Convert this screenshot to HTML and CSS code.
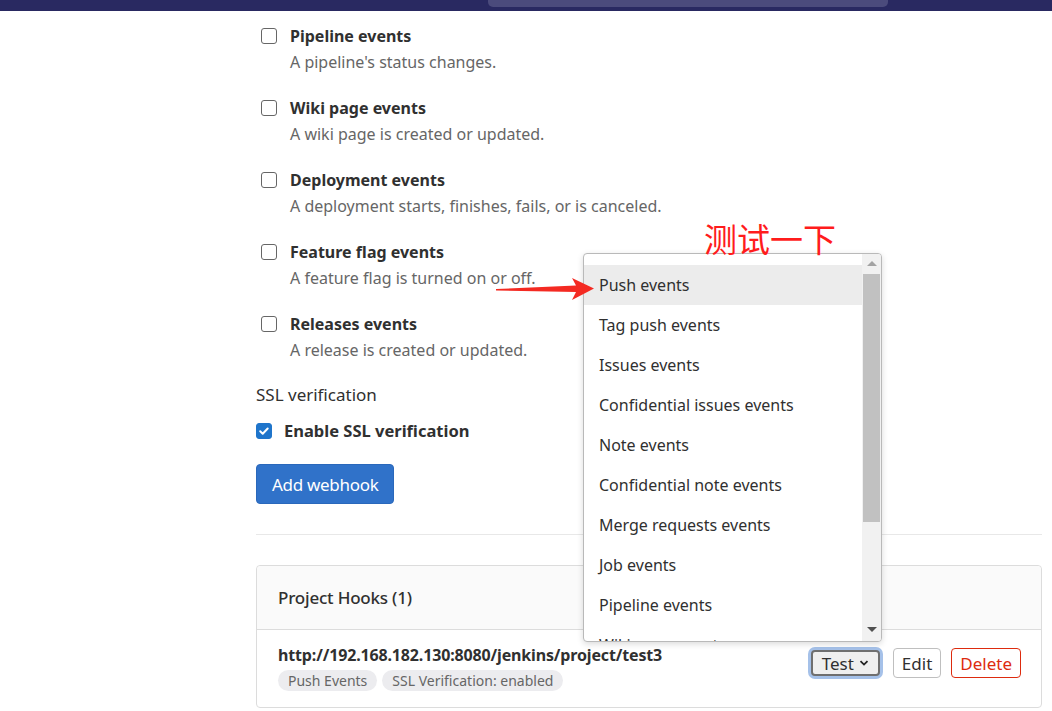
FILE: index.html
```html
<!DOCTYPE html>
<html lang="en">
<head>
    <meta charset="UTF-8">
    <meta name="viewport" content="width=device-width, initial-scale=1.0">
    <title>Webhooks</title>
    <link rel="stylesheet" href="styles.css">
</head>
<body>
    <header class="topbar">
        <div class="search"></div>
    </header>

    <main class="content">
        <ul class="events">
            <li class="event">
                <span class="box"></span>
                <div>
                    <div class="event-title">Pipeline events</div>
                    <div class="event-desc">A pipeline's status changes.</div>
                </div>
            </li>
            <li class="event">
                <span class="box"></span>
                <div>
                    <div class="event-title">Wiki page events</div>
                    <div class="event-desc">A wiki page is created or updated.</div>
                </div>
            </li>
            <li class="event">
                <span class="box"></span>
                <div>
                    <div class="event-title">Deployment events</div>
                    <div class="event-desc">A deployment starts, finishes, fails, or is canceled.</div>
                </div>
            </li>
            <li class="event">
                <span class="box"></span>
                <div>
                    <div class="event-title">Feature flag events</div>
                    <div class="event-desc">A feature flag is turned on or off.</div>
                </div>
            </li>
            <li class="event">
                <span class="box"></span>
                <div>
                    <div class="event-title">Releases events</div>
                    <div class="event-desc">A release is created or updated.</div>
                </div>
            </li>
        </ul>

        <div class="ssl-label">SSL verification</div>
        <div class="ssl-check">
            <span class="box checked">
                <svg width="12" height="12" viewBox="0 0 12 12"><path d="M2.2 6.3l2.5 2.4 5-5.2" fill="none" stroke="#fff" stroke-width="2" stroke-linecap="round" stroke-linejoin="round"/></svg>
            </span>
            <span>Enable SSL verification</span>
        </div>

        <button class="btn-primary">Add webhook</button>

        <hr class="divider">

        <section class="card">
            <div class="card-header">Project Hooks (1)</div>
            <div class="card-body">
                <div class="hook-info">
                    <div class="hook-url">http://192.168.182.130:8080/jenkins/project/test3</div>
                    <div class="badges">
                        <span class="badge">Push Events</span>
                        <span class="badge">SSL Verification: enabled</span>
                    </div>
                </div>
                <div class="actions">
                    <button class="btn btn-test">Test
                        <svg width="10" height="8" viewBox="0 0 10 8"><path d="M1.5 2.2l3.5 3.4 3.5-3.4" fill="none" stroke="#222" stroke-width="1.8"/></svg>
                    </button>
                    <button class="btn">Edit</button>
                    <button class="btn btn-danger">Delete</button>
                </div>
            </div>
        </section>
    </main>

    <!-- open "Test" list -->
    <div class="menu">
        <ul class="menu-list">
            <li class="active">Push events</li>
            <li>Tag push events</li>
            <li>Issues events</li>
            <li>Confidential issues events</li>
            <li>Note events</li>
            <li>Confidential note events</li>
            <li>Merge requests events</li>
            <li>Job events</li>
            <li>Pipeline events</li>
            <li>Wiki page events</li>
        </ul>
        <div class="menu-scroll">
            <span class="arrow-up"></span>
            <span class="thumb"></span>
            <span class="arrow-down"></span>
        </div>
    </div>

    <div class="note">测试一下</div>
    <svg class="note-arrow" width="102" height="28" viewBox="0 0 102 28">
        <polygon points="1,13 81,9.5 77,2 99,12.5 77,24 81,16 1,14.5" fill="#f42a22"/>
    </svg>
</body>
</html>
```

FILE: styles.css
```css
body {
    margin: 0;
    font-family: "Noto Sans", "Open Sans", sans-serif;
    color: #303030;
    background-color: #ffffff;
}
.topbar {
    height: 11px;
    background-color: #292961;
    display: flex;
}
.search {
    margin-left: 488px;
    width: 400px;
    height: 7px;
    background-color: #4b4b7c;
    border-radius: 0 0 5px 5px;
}
.content {
    margin-left: 256px;
    width: 786px;
    padding-top: 13px;
}
.events {
    list-style: none;
    margin: 0;
    padding: 0 0 0 5px;
    display: flex;
    flex-direction: column;
    gap: 20px;
}
.event {
    display: flex;
    gap: 13px;
}
.box {
    flex: none;
    width: 14px;
    height: 14px;
    margin-top: 4px;
    border: 1px solid #666;
    border-radius: 3px;
    background-color: #fff;
    display: flex;
    align-items: center;
    justify-content: center;
}
.box.checked {
    margin-top: 0;
    border-color: #1f75cb;
    background-color: #1f75cb;
}
.event-title {
    font-size: 16px;
    font-weight: 700;
    line-height: 24px;
}
.event-desc {
    font-size: 16px;
    line-height: 28px;
    color: #666;
}
.ssl-label {
    margin-top: 19px;
    font-size: 17px;
    line-height: 24px;
}
.ssl-check {
    margin-top: 12px;
    display: flex;
    align-items: center;
    gap: 12px;
    font-size: 16.5px;
    font-weight: 700;
    line-height: 24px;
}
.btn-primary {
    margin-top: 21px;
    height: 40px;
    padding: 0 15px;
    font-family: inherit;
    font-size: 17px;
    letter-spacing: -0.3px;
    color: #fff;
    background-color: #3072c9;
    border: 1px solid #2a68bb;
    border-radius: 4px;
}
.divider {
    margin: 30px 0 0;
    border: none;
    border-top: 1px solid #e8e8e8;
}
.card {
    margin-top: 30px;
    border: 1px solid #dcdcdc;
    border-radius: 4px;
}
.card-header {
    height: 63px;
    display: flex;
    align-items: center;
    padding: 0 21px;
    background-color: #fafafa;
    border-bottom: 1px solid #dcdcdc;
    border-radius: 4px 4px 0 0;
    font-size: 17px;
    font-weight: 500;
    letter-spacing: -0.2px;
}
.card-body {
    display: flex;
    justify-content: space-between;
    align-items: flex-start;
    padding: 13px 20px 16px 21px;
}
.hook-url {
    font-size: 16px;
    font-weight: 700;
    line-height: 24px;
    letter-spacing: -0.15px;
}
.badges {
    margin-top: 3px;
    display: flex;
    gap: 5px;
}
.badge {
    height: 21px;
    line-height: 21px;
    padding: 0 10px;
    border-radius: 11px;
    background-color: #ececef;
    color: #666;
    font-size: 14px;
}
.actions {
    margin-top: 5px;
    display: flex;
    align-items: center;
    gap: 10px;
}
.btn {
    height: 30px;
    padding: 0 8px;
    font-family: inherit;
    font-size: 17px;
    color: #303030;
    background-color: #fff;
    border: 1px solid #bfbfbf;
    border-radius: 4px;
}
.btn-test {
    display: flex;
    align-items: center;
    gap: 5px;
    height: 26px;
    margin-right: 3px;
    padding: 0 9px;
    background-color: #efefef;
    border: 2px solid #6f6f6f;
    box-shadow: 0 0 0 3px #a5c1e9;
}
.btn-danger {
    color: #dd2b0e;
    border-color: #dd2b0e;
}
.menu {
    position: absolute;
    left: 583px;
    top: 253px;
    width: 297px;
    height: 387px;
    display: flex;
    background-color: #fff;
    border: 1px solid #b9b9b9;
    border-radius: 4px;
    box-shadow: 0 2px 6px rgba(0, 0, 0, 0.15);
    overflow: hidden;
}
.menu-list {
    flex: 1;
    list-style: none;
    margin: 0;
    padding: 11px 0 0;
    overflow: hidden;
}
.menu-list li {
    height: 40px;
    line-height: 40px;
    padding-left: 15px;
    font-size: 16px;
    color: #303030;
    white-space: nowrap;
}
.menu-list li.active {
    background-color: #ececec;
}
.menu-scroll {
    width: 19px;
    background-color: #f1f1f1;
    display: flex;
    flex-direction: column;
    align-items: center;
}
.arrow-up {
    margin-top: 7px;
    border-left: 5px solid transparent;
    border-right: 5px solid transparent;
    border-bottom: 5px solid #a3a3a3;
}
.thumb {
    margin-top: 8px;
    width: 17px;
    height: 248px;
    background-color: #c1c1c1;
}
.arrow-down {
    margin-top: auto;
    margin-bottom: 9px;
    border-left: 5px solid transparent;
    border-right: 5px solid transparent;
    border-top: 5px solid #505050;
}
.note {
    position: absolute;
    left: 704px;
    top: 216px;
    font-family: "Noto Sans CJK SC", sans-serif;
    font-size: 33px;
    line-height: 44px;
    color: #ff1c1c;
}
.note-arrow {
    position: absolute;
    left: 495px;
    top: 276px;
}
```
